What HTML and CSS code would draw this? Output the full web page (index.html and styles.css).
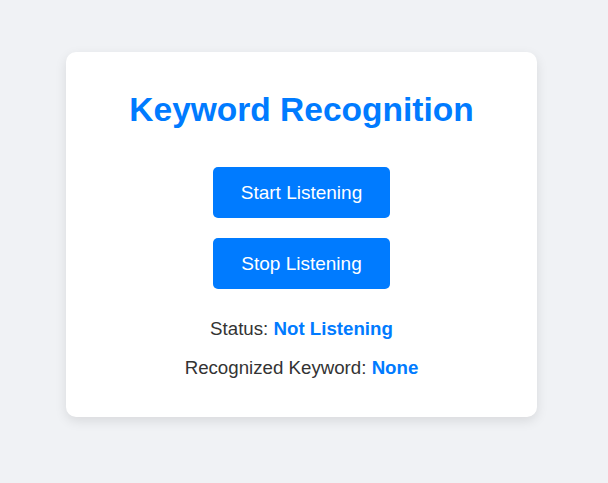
FILE: index.html
```html
<!DOCTYPE html>
<html lang="en">
<head>
<meta charset="UTF-8">
<title>Keyword Recognition</title>
<link rel="stylesheet" href="styles.css">
</head>
<body>
  <div class="card">
    <h1 class="title">Keyword Recognition</h1>
    <div class="actions">
      <button class="btn">Start Listening</button>
      <button class="btn">Stop Listening</button>
    </div>
    <div class="info">
      <p class="line">Status: <span class="value">Not Listening</span></p>
      <p class="line">Recognized Keyword: <span class="value">None</span></p>
    </div>
  </div>
</body>
</html>
```
FILE: styles.css
```css
html, body {
  margin: 0;
  padding: 0;
}
body {
  background: #f0f2f5;
  font-family: "Liberation Sans", Arial, sans-serif;
  display: flex;
  justify-content: center;
  align-items: flex-start;
  padding: 52px 5px 0 0;
  min-height: 483px;
  box-sizing: border-box;
}
.card {
  width: 471px;
  box-sizing: border-box;
  background: #ffffff;
  border-radius: 10px;
  box-shadow: 0 4px 12px rgba(0, 0, 0, 0.1);
  padding: 38px 30px 38px;
  display: flex;
  flex-direction: column;
  align-items: center;
  text-align: center;
}
.title {
  margin: 0;
  font-size: 33.5px;
  line-height: 40px;
  font-weight: bold;
  color: #007bff;
}
.actions {
  margin-top: 37px;
  display: flex;
  flex-direction: column;
  align-items: center;
  gap: 20px;
}
.btn {
  font-family: "Liberation Sans", Arial, sans-serif;
  font-size: 19px;
  line-height: 21px;
  padding: 15px 28px;
  background: #007bff;
  color: #ffffff;
  border: none;
  border-radius: 5px;
  cursor: pointer;
}
.info {
  margin-top: 29px;
  display: flex;
  flex-direction: column;
  gap: 17px;
}
.line {
  margin: 0;
  font-size: 18.7px;
  line-height: 22px;
  color: #333333;
}
.value {
  font-weight: bold;
  color: #007bff;
}
```
